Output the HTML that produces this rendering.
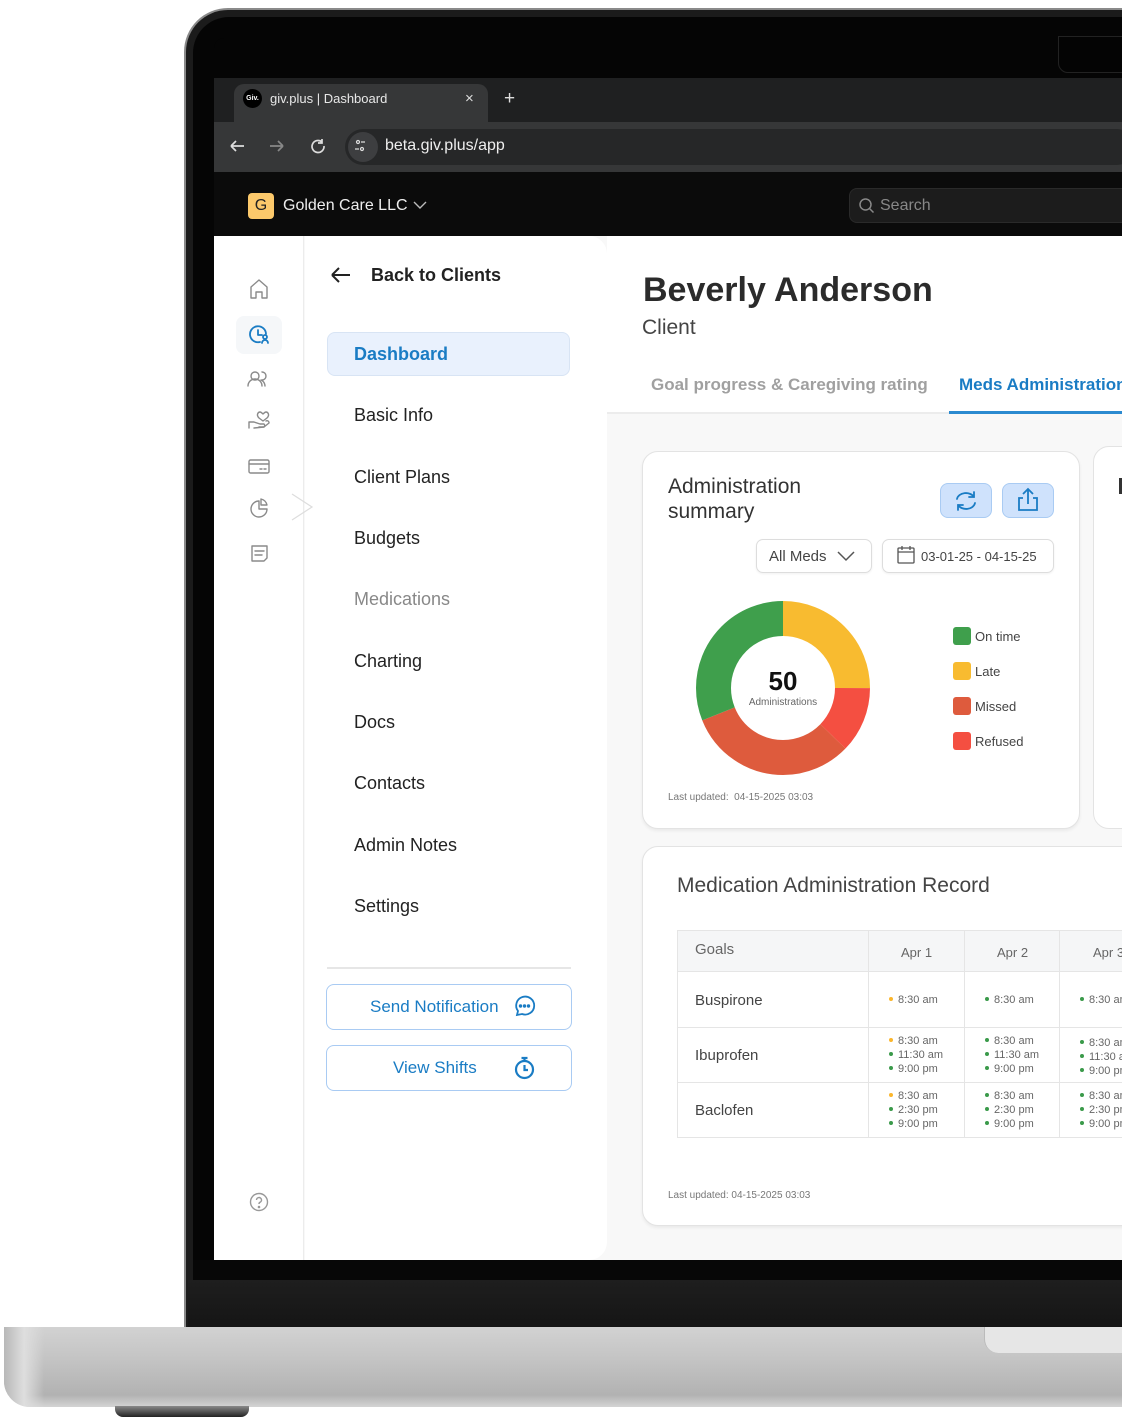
<!DOCTYPE html>
<html><head><meta charset="utf-8"><style>
*{margin:0;padding:0;box-sizing:border-box}
body{width:1122px;height:1422px;overflow:hidden;background:#fff;font-family:"Liberation Sans",Arial,sans-serif;position:relative}
.a{position:absolute}
.nav{position:absolute;left:354px;font-size:18px;color:#222}
.t{font-size:11px;color:#666;line-height:14px}
.d{display:inline-block;width:4px;height:4px;border-radius:50%;background:#3a9a4a;margin-right:5px;vertical-align:2px}
.o{background:#fbb62c}
</style></head><body>
<!-- lid -->
<div class="a" style="left:184px;top:8px;width:1000px;height:1330px;border-radius:44px 0 0 0;background:#8a8a8a"></div>
<div class="a" style="left:186px;top:10px;width:1000px;height:1330px;border-radius:42px 0 0 0;background:#1b1b1b"></div>
<div class="a" style="left:193px;top:17px;width:1000px;height:1320px;border-radius:36px 0 0 0;background:#050505"></div>
<div class="a" style="left:214px;top:38px;width:908px;height:40px;background:#050505;border-top-left-radius:10px"></div>
<div class="a" style="left:1058px;top:36px;width:80px;height:37px;border:1px solid #222;border-radius:0 0 0 10px;background:#040404"></div>
<!-- tab bar -->
<div class="a" style="left:214px;top:78px;width:908px;height:44px;background:#1f2021"></div>
<div class="a" style="left:234px;top:84px;width:254px;height:40px;background:#363738;border-radius:10px 10px 0 0"></div>
<div class="a" style="left:243px;top:89px;width:19px;height:19px;border-radius:50%;background:#000;color:#fff;font-size:7px;line-height:19px;text-align:center;font-weight:bold">Giv.</div>
<div class="a" style="left:270px;top:91px;color:#e8e8e8;font-size:13px">giv.plus | Dashboard</div>
<div class="a" style="left:465px;top:90px;color:#ddd;font-size:15px">×</div>
<div class="a" style="left:504px;top:88px;color:#ddd;font-size:19px">+</div>
<!-- address -->
<div class="a" style="left:214px;top:122px;width:908px;height:50px;background:#363738"></div>
<div class="a" style="left:345px;top:129px;width:790px;height:36px;border-radius:18px;background:#262728"></div>
<div class="a" style="left:348px;top:132px;width:30px;height:30px;border-radius:50%;background:#3d3e40"></div>
<svg class="a" style="left:228px;top:137px" width="140" height="20" viewBox="0 0 140 20" fill="none" stroke="#ddd" stroke-width="1.7"><path d="M3 9h13M3 9l5-5M3 9l5 5"/><path d="M42 9h13M55 9l-5-5M55 9l-5 5" stroke="#888"/><path d="M94 5a6 6 0 1 0 2 4M94 2v4h-4"/><circle cx="130" cy="5" r="1.5" stroke-width="1.2"/><path d="M133 5h4M127 12h4" stroke-width="1.2"/><circle cx="134" cy="12" r="1.5" stroke-width="1.2"/></svg>
<div class="a" style="left:385px;top:137px;color:#eee;font-size:16px">beta.giv.plus/app</div>
<!-- app header -->
<div class="a" style="left:214px;top:172px;width:908px;height:64px;background:#0b0b0b"></div>
<div class="a" style="left:248px;top:193px;width:26px;height:26px;border-radius:4px;background:#fcc96b;color:#222;font-size:16px;line-height:26px;text-align:center">G</div>
<div class="a" style="left:283px;top:197px;color:#eee;font-size:16px">Golden Care LLC</div>
<svg class="a" style="left:412px;top:199px" width="16" height="12"><path d="M2 3l6 6 6-6" stroke="#bbb" fill="none" stroke-width="1.4"/></svg>
<div class="a" style="left:849px;top:188px;width:290px;height:35px;border-radius:8px;background:#1c1c1c;border:1px solid #2a2a2a"></div>
<svg class="a" style="left:858px;top:197px" width="18" height="18" fill="none" stroke="#888" stroke-width="1.5"><circle cx="7.5" cy="7.5" r="5.5"/><path d="M11.5 11.5l4 4"/></svg>
<div class="a" style="left:880px;top:197px;color:#888;font-size:16px">Search</div>
<!-- body -->
<div class="a" style="left:214px;top:236px;width:908px;height:1024px;background:#f8f8f8"></div>
<div class="a" style="left:214px;top:236px;width:90px;height:1024px;background:#fff;border-right:1px solid #ececec"></div>
<div class="a" style="left:305px;top:236px;width:302px;height:1024px;background:#fff;border-radius:0 18px 18px 0"></div>
<div class="a" style="left:607px;top:236px;width:515px;height:178px;background:#fff;border-bottom:2px solid #ececec"></div>
<!-- rail icons -->
<div class="a" style="left:236px;top:316px;width:46px;height:38px;border-radius:8px;background:#f5f7f9"></div>
<svg class="a" style="left:244px;top:276px" width="30" height="300" fill="none" stroke="#8a8a8a" stroke-width="1.4" stroke-linejoin="round" stroke-linecap="round">
<path d="M7 11l8-7 8 7v11h-5v-6h-6v6H7z"/>
<g stroke="#1a7cc4" stroke-width="1.8"><path d="M22 58a8 8 0 1 0-6 8"/><path d="M14 54v5h4"/><circle cx="21" cy="61" r="2"/><path d="M18 67a3 3 0 0 1 6 0"/></g>
<circle cx="11" cy="100" r="4"/><path d="M4 110a7 7 0 0 1 14 0"/><path d="M18 96a4 4 0 0 1 0 8M21 110a7 7 0 0 0-4-6"/>
<path d="M5 152v-6h5l6 2h4a2 2 0 0 1 0 3h-5"/><path d="M10 152l10-1 5-4a2 2 0 0 0-3-2"/><path d="M15 142c-3-3-1-6 1-6 1 0 2 1 3 2 1-1 2-2 3-2 2 0 4 3 1 6l-4 3z"/>
<rect x="5" y="184" width="20" height="13" rx="1.5"/><path d="M5 188h20M16 193h2M20 193h2"/>
<path d="M15 225a8 8 0 1 0 8 8h-8z"/><path d="M17 223a8 8 0 0 1 6 6h-6z"/>
<path d="M8 270h15v12l-3 3H8z"/><path d="M11 275h9M11 279h7"/>
</svg>
<svg class="a" style="left:290px;top:492px" width="26" height="30" fill="none" stroke="#ddd" stroke-width="1.2"><path d="M2 2l20 13L2 28"/></svg>
<svg class="a" style="left:248px;top:1191px" width="22" height="22" fill="none" stroke="#999" stroke-width="1.4"><circle cx="11" cy="11" r="8.5"/><path d="M8.5 9a2.5 2.5 0 1 1 3.5 2.3c-.7.3-1 .8-1 1.7"/><circle cx="11" cy="16" r=".6" fill="#999"/></svg>
<!-- nav panel -->
<svg class="a" style="left:330px;top:266px" width="22" height="18" fill="none" stroke="#222" stroke-width="2"><path d="M2 9h18M2 9l7-7M2 9l7 7"/></svg>
<div class="a" style="left:371px;top:265px;font-size:18px;font-weight:bold;color:#222">Back to Clients</div>
<div class="a" style="left:327px;top:332px;width:243px;height:44px;border-radius:8px;background:#e9f1fd;border:1px solid #d8e4f4"></div>
<div class="nav" style="top:344px;color:#1a7cc4;font-weight:bold">Dashboard</div>
<div class="nav" style="top:405px">Basic Info</div>
<div class="nav" style="top:467px">Client Plans</div>
<div class="nav" style="top:528px">Budgets</div>
<div class="nav" style="top:589px;color:#888">Medications</div>
<div class="nav" style="top:651px">Charting</div>
<div class="nav" style="top:712px">Docs</div>
<div class="nav" style="top:773px">Contacts</div>
<div class="nav" style="top:835px">Admin Notes</div>
<div class="nav" style="top:896px">Settings</div>
<div class="a" style="left:327px;top:967px;width:244px;height:2px;background:#e6e6e6"></div>
<div class="a" style="left:326px;top:984px;width:246px;height:46px;border:1.5px solid #a9cbf3;border-radius:8px"></div>
<div class="a" style="left:370px;top:997px;font-size:17px;color:#1a7cc4">Send Notification</div>
<svg class="a" style="left:512px;top:994px" width="25" height="25" fill="none" stroke="#1a7cc4" stroke-width="1.8"><path d="M5 21l1-4a9 9 0 1 1 4 3z"/><circle cx="8.5" cy="12" r=".8" fill="#1a7cc4"/><circle cx="12.5" cy="12" r=".8" fill="#1a7cc4"/><circle cx="16.5" cy="12" r=".8" fill="#1a7cc4"/></svg>
<div class="a" style="left:326px;top:1045px;width:246px;height:46px;border:1.5px solid #a9cbf3;border-radius:8px"></div>
<div class="a" style="left:393px;top:1058px;font-size:17px;color:#1a7cc4">View Shifts</div>
<svg class="a" style="left:512px;top:1055px" width="25" height="26" fill="none" stroke="#1a7cc4" stroke-width="2.2"><circle cx="12.5" cy="14.5" r="8.5"/><path d="M9.5 3h6M12.5 3v3M12.5 10v5h3.5"/></svg>
<!-- main header -->
<div class="a" style="left:643px;top:271px;font-size:34px;font-weight:bold;color:#2b2b2b">Beverly Anderson</div>
<div class="a" style="left:642px;top:316px;font-size:21px;color:#444">Client</div>
<div class="a" style="left:651px;top:375px;font-size:17px;font-weight:bold;color:#a0a0a0">Goal progress &amp; Caregiving rating</div>
<div class="a" style="left:959px;top:375px;font-size:17px;font-weight:bold;color:#1a7cc4;white-space:nowrap">Meds Administration</div>
<div class="a" style="left:949px;top:411px;width:173px;height:3px;background:#2b8ad0"></div>
<!-- card 1 -->
<div class="a" style="left:642px;top:451px;width:438px;height:378px;background:#fff;border:1px solid #e3e3e3;border-radius:16px;box-shadow:0 2px 3px rgba(0,0,0,.06)"></div>
<div class="a" style="left:668px;top:474px;font-size:21px;line-height:25px;color:#333">Administration<br>summary</div>
<div class="a" style="left:940px;top:483px;width:52px;height:35px;border-radius:8px;background:#cfe2fc;border:1px solid #a9cbf3"></div>
<div class="a" style="left:1002px;top:483px;width:52px;height:35px;border-radius:8px;background:#cfe2fc;border:1px solid #a9cbf3"></div>
<svg class="a" style="left:953px;top:488px" width="26" height="26" fill="none" stroke="#1a7cc4" stroke-width="1.8" stroke-linecap="round"><path d="M4 11a9 7 0 0 1 17-2M21 4v5h-5M22 15a9 7 0 0 1-17 2M5 22v-5h5"/></svg>
<svg class="a" style="left:1015px;top:486px" width="26" height="28" fill="none" stroke="#1a7cc4" stroke-width="1.8"><path d="M13 3v15M8 8l5-5 5 5M8 12H4v12h18V12h-4"/></svg>
<div class="a" style="left:756px;top:539px;width:116px;height:34px;border:1px solid #ddd;border-radius:7px;box-shadow:0 1px 2px rgba(0,0,0,.06)"></div>
<div class="a" style="left:769px;top:548px;font-size:15px;color:#444">All Meds</div>
<svg class="a" style="left:836px;top:549px" width="20" height="14" fill="none" stroke="#555" stroke-width="1.5"><path d="M2 3l8 8 8-8"/></svg>
<div class="a" style="left:882px;top:539px;width:172px;height:34px;border:1px solid #ddd;border-radius:7px;box-shadow:0 1px 2px rgba(0,0,0,.06)"></div>
<svg class="a" style="left:896px;top:545px" width="20" height="20" fill="none" stroke="#555" stroke-width="1.3"><rect x="2" y="3" width="16" height="15" rx="1"/><path d="M2 7h16M6 1v4M14 1v4"/></svg>
<div class="a" style="left:921px;top:549px;font-size:13px;color:#444">03-01-25 - 04-15-25</div>
<svg class="a" style="left:694px;top:599px" width="178" height="178" viewBox="0 0 178 178">
<g transform="rotate(-90 89 89)" fill="none" stroke-width="35">
<circle cx="89" cy="89" r="69.5" stroke="#f8bb30" stroke-dasharray="109.2 327.5" stroke-dashoffset="0"/>
<circle cx="89" cy="89" r="69.5" stroke="#f44f41" stroke-dasharray="53.4 383.3" stroke-dashoffset="-109.2"/>
<circle cx="89" cy="89" r="69.5" stroke="#de5b3d" stroke-dasharray="138.3 298.4" stroke-dashoffset="-162.6"/>
<circle cx="89" cy="89" r="69.5" stroke="#3f9f4c" stroke-dasharray="135.8 300.9" stroke-dashoffset="-300.9"/>
</g></svg>
<div class="a" style="left:743px;top:666px;width:80px;text-align:center;font-size:26px;font-weight:bold;color:#111">50</div>
<div class="a" style="left:733px;top:697px;width:100px;text-align:center;font-size:10px;color:#666">Administrations</div>
<div class="a" style="left:953px;top:627px;width:18px;height:18px;border-radius:3px;background:#3f9f4c"></div>
<div class="a" style="left:953px;top:662px;width:18px;height:18px;border-radius:3px;background:#f8bb30"></div>
<div class="a" style="left:953px;top:697px;width:18px;height:18px;border-radius:3px;background:#de5b3d"></div>
<div class="a" style="left:953px;top:732px;width:18px;height:18px;border-radius:3px;background:#f44f41"></div>
<div class="a" style="left:975px;top:629px;font-size:13px;color:#444">On time</div>
<div class="a" style="left:975px;top:664px;font-size:13px;color:#444">Late</div>
<div class="a" style="left:975px;top:699px;font-size:13px;color:#444">Missed</div>
<div class="a" style="left:975px;top:734px;font-size:13px;color:#444">Refused</div>
<div class="a" style="left:668px;top:792px;font-size:10px;color:#777">Last updated:&nbsp; 04-15-2025 03:03</div>
<!-- card 2 partial -->
<div class="a" style="left:1093px;top:446px;width:60px;height:383px;background:#fff;border:1px solid #e3e3e3;border-radius:16px"></div>
<div class="a" style="left:1119px;top:478px;width:3px;height:16px;background:#333"></div>
<!-- card 3 -->
<div class="a" style="left:642px;top:846px;width:520px;height:380px;background:#fff;border:1px solid #e3e3e3;border-radius:16px;box-shadow:0 2px 3px rgba(0,0,0,.06)"></div>
<div class="a" style="left:677px;top:874px;font-size:21px;color:#444">Medication Administration Record</div>
<div class="a" style="left:677px;top:930px;width:460px;height:208px;border:1px solid #e5e5e5;border-right:none"></div>
<div class="a" style="left:678px;top:931px;width:460px;height:41px;background:#f5f6f7;border-bottom:1px solid #e5e5e5"></div>
<div class="a" style="left:868px;top:931px;width:1px;height:206px;background:#e5e5e5"></div>
<div class="a" style="left:964px;top:931px;width:1px;height:206px;background:#e5e5e5"></div>
<div class="a" style="left:1059px;top:931px;width:1px;height:206px;background:#e5e5e5"></div>
<div class="a" style="left:678px;top:1027px;width:460px;height:1px;background:#e5e5e5"></div>
<div class="a" style="left:678px;top:1082px;width:460px;height:1px;background:#e5e5e5"></div>
<div class="a" style="left:695px;top:941px;font-size:15px;color:#666">Goals</div>
<div class="a" style="left:901px;top:945px;font-size:13px;color:#666">Apr 1</div>
<div class="a" style="left:997px;top:945px;font-size:13px;color:#666">Apr 2</div>
<div class="a" style="left:1093px;top:945px;font-size:13px;color:#666;white-space:nowrap">Apr 3</div>
<div class="a" style="left:695px;top:992px;font-size:15px;color:#444">Buspirone</div>
<div class="a" style="left:695px;top:1047px;font-size:15px;color:#444">Ibuprofen</div>
<div class="a" style="left:695px;top:1102px;font-size:15px;color:#444">Baclofen</div>
<div class="a t" style="left:889px;top:993px"><span class="d o"></span>8:30 am</div>
<div class="a t" style="left:985px;top:993px"><span class="d"></span>8:30 am</div>
<div class="a t" style="left:1080px;top:993px;white-space:nowrap"><span class="d"></span>8:30 am</div>
<div class="a t" style="left:889px;top:1034px"><span class="d o"></span>8:30 am<br><span class="d"></span>11:30 am<br><span class="d"></span>9:00 pm</div>
<div class="a t" style="left:985px;top:1034px"><span class="d"></span>8:30 am<br><span class="d"></span>11:30 am<br><span class="d"></span>9:00 pm</div>
<div class="a t" style="left:1080px;top:1036px;white-space:nowrap"><span class="d"></span>8:30 am<br><span class="d"></span>11:30 am<br><span class="d"></span>9:00 pm</div>
<div class="a t" style="left:889px;top:1089px"><span class="d o"></span>8:30 am<br><span class="d"></span>2:30 pm<br><span class="d"></span>9:00 pm</div>
<div class="a t" style="left:985px;top:1089px"><span class="d"></span>8:30 am<br><span class="d"></span>2:30 pm<br><span class="d"></span>9:00 pm</div>
<div class="a t" style="left:1080px;top:1089px;white-space:nowrap"><span class="d"></span>8:30 am<br><span class="d"></span>2:30 pm<br><span class="d"></span>9:00 pm</div>
<div class="a" style="left:668px;top:1190px;font-size:10px;color:#777">Last updated: 04-15-2025 03:03</div>
<!-- bottom bezel -->
<div class="a" style="left:193px;top:1260px;width:929px;height:20px;background:#070707"></div>
<div class="a" style="left:188px;top:1280px;width:934px;height:48px;background:linear-gradient(#1e1e1e,#151515)"></div>
<!-- base -->
<div class="a" style="left:4px;top:1327px;width:1118px;height:80px;border-radius:0 0 0 26px;background:linear-gradient(#d2d2d2,#c4c4c4 40%,#b2b2b2 85%,#d4d4d4)"></div>
<div class="a" style="left:4px;top:1327px;width:40px;height:80px;border-radius:0 0 0 26px;background:linear-gradient(90deg,#b8b8b8,#dedede 50%,rgba(210,210,210,0))"></div>
<div class="a" style="left:984px;top:1327px;width:150px;height:26px;border-radius:0 0 0 14px;background:#e6e6e6;border-left:1px solid #bbb"></div>
<div class="a" style="left:115px;top:1406px;width:134px;height:11px;border-radius:0 0 8px 8px;background:linear-gradient(#8a8a8a,#222)"></div>
</body></html>
